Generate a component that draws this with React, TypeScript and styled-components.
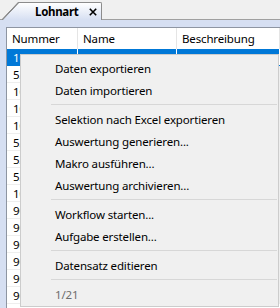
import React from "react";
import styled, { createGlobalStyle } from "styled-components";

const Global = createGlobalStyle`
  html, body { margin: 0; padding: 0; background: #f0f0f0; }
  body {
    font-family: "Noto Sans", "Liberation Sans", sans-serif;
    font-size: 11.5px;
    letter-spacing: -0.15px;
    color: #000;
  }
  * { box-sizing: border-box; }
`;

const Screen = styled.div`
  position: relative;
  width: 280px;
  height: 308px;
  overflow: hidden;
  background: #f0f0f0;
  display: flex;
  flex-direction: column;
`;

const TabStrip = styled.div`
  flex: none;
  height: 20px;
  display: flex;
  align-items: flex-end;
  padding-left: 2px;
  border-bottom: 1px solid #a0a0a0;
`;

const Tab = styled.div`
  display: flex;
  height: 18px;
  margin-bottom: -1px;
`;

const TabSlant = styled.div`
  width: 17px;
  height: 100%;
  background:
    linear-gradient(to bottom right, #f0f0f0 calc(50% - 1px), #8c8c8c calc(50% - 0.4px), #8c8c8c calc(50% + 0.4px), transparent calc(50% + 1px)),
    linear-gradient(to bottom, #ffffff, #d6dff2);
`;

const TabBody = styled.div`
  display: flex;
  align-items: center;
  gap: 10px;
  height: 100%;
  padding: 0 4px 0 16px;
  border-top: 1px solid #8c8c8c;
  border-right: 1px solid #8c8c8c;
  border-top-right-radius: 2px;
  background: linear-gradient(to bottom, #ffffff, #d6dff2);
`;

const TabTitle = styled.span`
  font-weight: 700;
  font-size: 11.5px;
  letter-spacing: -0.3px;
  line-height: 16px;
`;

const CloseIcon = styled.svg`
  width: 8px;
  height: 8px;
  display: block;
`;

const Frame = styled.div`
  flex: 1;
  display: flex;
  padding: 7px 0 0 6px;
  background: #d6dff2;
  min-height: 0;
`;

const Grid = styled.div`
  flex: 1;
  background: #fff;
  border-left: 1px solid #8e95a2;
  border-top: 1px solid #8e95a2;
  display: flex;
  flex-direction: column;
  min-width: 0;
`;

const Row = styled.div<{ $header?: boolean; $selected?: boolean }>`
  display: grid;
  grid-template-columns: 71px 99px 1fr;
  height: ${(p) => (p.$header ? "21px" : "17px")};
  background: ${(p) => (p.$selected ? "#0078d7" : "#fff")};
  color: ${(p) => (p.$selected ? "#fff" : "#000")};
  border-bottom: ${(p) => (p.$header ? "none" : p.$selected ? "1px solid #0078d7" : "1px solid #eeeeee")};
  flex: none;
`;

const Cell = styled.div<{ $header?: boolean; $selected?: boolean }>`
  display: flex;
  align-items: center;
  padding-left: ${(p) => (p.$header ? "5px" : "6px")};
  white-space: nowrap;
  overflow: hidden;
  border-right: 1px solid ${(p) => (p.$selected ? "#ffffff" : p.$header ? "#e5e5e5" : "#eeeeee")};
  line-height: 15px;
`;

const Menu = styled.div`
  position: absolute;
  left: 20px;
  top: 54px;
  width: 259px;
  background: #f0f0f0;
  border: 1px solid #cccccc;
  padding: 2px 0 1px;
  display: flex;
  flex-direction: column;
`;

const MenuItem = styled.div<{ $disabled?: boolean }>`
  height: 22px;
  display: flex;
  align-items: center;
  padding-left: 34px;
  color: ${(p) => (p.$disabled ? "#6d6d6d" : "#000")};
  white-space: nowrap;
`;

const Separator = styled.div`
  height: 7px;
  display: flex;
  align-items: center;
  margin: 0 1px 0 30px;
  &::after {
    content: "";
    display: block;
    width: 100%;
    height: 1px;
    background: #d7d7d7;
  }
`;

const numbers = [
  "1000", "5200", "1010", "1020", "1030", "5210", "5220", "5230",
  "1040", "9000", "9010", "9020", "9030", "9040", "9050",
];

type Entry = { label: string; disabled?: boolean } | "sep";

const menu: Entry[] = [
  { label: "Daten exportieren" },
  { label: "Daten importieren" },
  "sep",
  { label: "Selektion nach Excel exportieren" },
  { label: "Auswertung generieren..." },
  { label: "Makro ausführen..." },
  { label: "Auswertung archivieren..." },
  "sep",
  { label: "Workflow starten..." },
  { label: "Aufgabe erstellen..." },
  "sep",
  { label: "Datensatz editieren" },
  "sep",
  { label: "1/21", disabled: true },
];

export default function App() {
  return (
    <>
      <Global />
      <Screen>
        <TabStrip>
          <Tab>
            <TabSlant />
            <TabBody>
              <TabTitle>Lohnart</TabTitle>
              <CloseIcon viewBox="0 0 8 8">
                <path d="M0.8 0.8 L7.2 7.2 M7.2 0.8 L0.8 7.2" stroke="#000" strokeWidth="1.6" fill="none" />
              </CloseIcon>
            </TabBody>
          </Tab>
        </TabStrip>
        <Frame>
          <Grid>
            <Row $header>
              <Cell $header>Nummer</Cell>
              <Cell $header>Name</Cell>
              <Cell $header>Beschreibung</Cell>
            </Row>
            {numbers.map((n, i) => (
              <Row key={i} $selected={i === 0}>
                <Cell $selected={i === 0}>{n}</Cell>
                <Cell $selected={i === 0} />
                <Cell $selected={i === 0} />
              </Row>
            ))}
          </Grid>
        </Frame>
        <Menu>
          {menu.map((m, i) =>
            m === "sep" ? (
              <Separator key={i} />
            ) : (
              <MenuItem key={i} $disabled={m.disabled}>
                {m.label}
              </MenuItem>
            )
          )}
        </Menu>
      </Screen>
    </>
  );
}
